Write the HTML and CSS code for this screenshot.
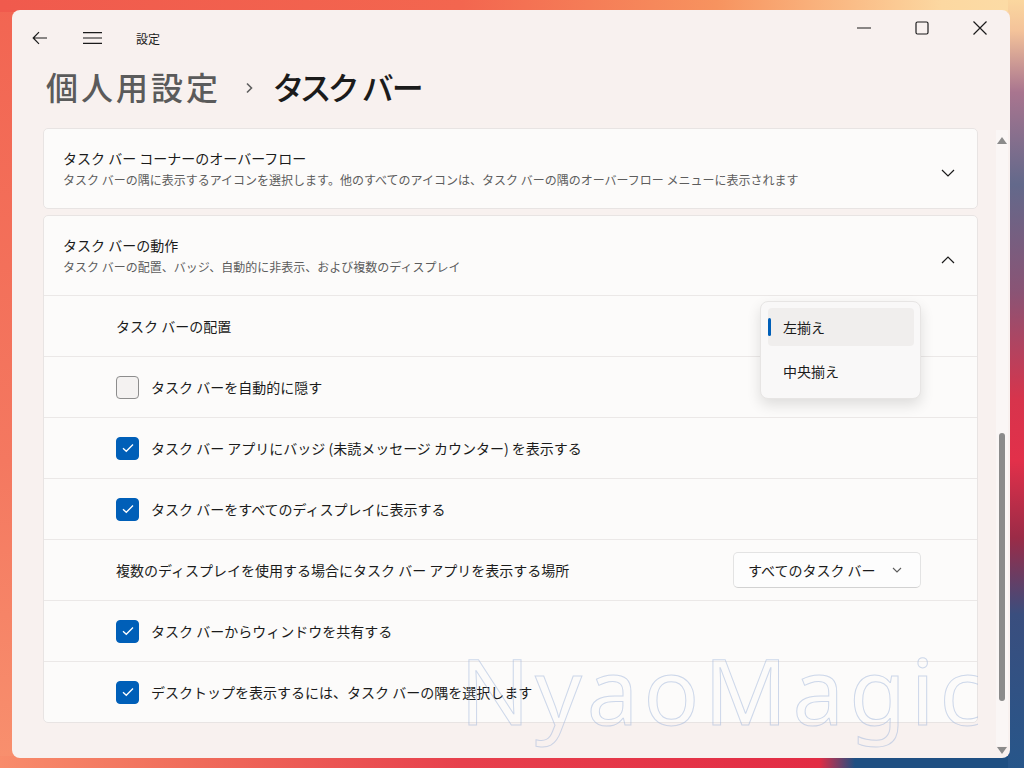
FILE: index.html
```html
<!DOCTYPE html>
<html lang="ja">
<head>
  <meta charset="UTF-8" />
  <title>設定</title>
  <link rel="stylesheet" href="styles.css">
</head>
<body>
  <div class="window">
    <div class="titlebar">
      <div class="nav">
        <span class="nav-btn">
          <svg width="16" height="14" viewBox="0 0 16 14"><path d="M15 7H1.5M7 1.2L1.2 7L7 12.8" fill="none" stroke="#1b1b1b" stroke-width="1.2"/></svg>
        </span>
        <span class="nav-btn">
          <svg width="19" height="12" viewBox="0 0 19 12"><path d="M0 0.6H19M0 6H19M0 11.4H19" fill="none" stroke="#1b1b1b" stroke-width="1.2"/></svg>
        </span>
        <span class="app-title">設定</span>
      </div>
      <div class="caption">
        <span class="cap-btn">
          <svg width="14" height="14" viewBox="0 0 14 14"><path d="M0 7H14" stroke="#1b1b1b" stroke-width="1.2"/></svg>
        </span>
        <span class="cap-btn">
          <svg width="14" height="14" viewBox="0 0 14 14"><rect x="1" y="1" width="12" height="12" rx="1.5" fill="none" stroke="#1b1b1b" stroke-width="1.2"/></svg>
        </span>
        <span class="cap-btn">
          <svg width="14" height="14" viewBox="0 0 14 14"><path d="M0.5 0.5L13.5 13.5M13.5 0.5L0.5 13.5" stroke="#1b1b1b" stroke-width="1.2"/></svg>
        </span>
      </div>
    </div>

    <h1 class="heading">
      <span class="crumb">個人用設定</span>
      <svg class="crumb-sep" width="9" height="14" viewBox="0 0 9 14"><path d="M2 2.5L6.5 7L2 11.5" fill="none" stroke="#5f5f5f" stroke-width="1.6"/></svg>
      <span class="current">タスク バー</span>
    </h1>

    <div class="content">
      <div class="cards">
        <div class="card">
          <div class="card-header">
            <div class="card-text">
              <div class="card-title">タスク バー コーナーのオーバーフロー</div>
              <div class="card-sub">タスク バーの隅に表示するアイコンを選択します。他のすべてのアイコンは、タスク バーの隅のオーバーフロー メニューに表示されます</div>
            </div>
            <svg class="chev" width="14" height="8" viewBox="0 0 14 8"><path d="M1 1L7 7L13 1" fill="none" stroke="#1b1b1b" stroke-width="1.2"/></svg>
          </div>
        </div>

        <div class="card">
          <div class="card-header">
            <div class="card-text">
              <div class="card-title">タスク バーの動作</div>
              <div class="card-sub">タスク バーの配置、バッジ、自動的に非表示、および複数のディスプレイ</div>
            </div>
            <svg class="chev" width="14" height="8" viewBox="0 0 14 8"><path d="M1 7L7 1L13 7" fill="none" stroke="#1b1b1b" stroke-width="1.2"/></svg>
          </div>

          <div class="row">
            <span class="row-label">タスク バーの配置</span>
          </div>
          <div class="row">
            <span class="checkbox"></span>
            <span class="row-label">タスク バーを自動的に隠す</span>
          </div>
          <div class="row">
            <span class="checkbox checked"><svg width="12" height="10" viewBox="0 0 12 10"><path d="M1 5.2L4.3 8.3L11 1.5" fill="none" stroke="#fff" stroke-width="1.3"/></svg></span>
            <span class="row-label">タスク バー アプリにバッジ (未読メッセージ カウンター) を表示する</span>
          </div>
          <div class="row">
            <span class="checkbox checked"><svg width="12" height="10" viewBox="0 0 12 10"><path d="M1 5.2L4.3 8.3L11 1.5" fill="none" stroke="#fff" stroke-width="1.3"/></svg></span>
            <span class="row-label">タスク バーをすべてのディスプレイに表示する</span>
          </div>
          <div class="row">
            <span class="row-label">複数のディスプレイを使用する場合にタスク バー アプリを表示する場所</span>
            <span class="combo">
              すべてのタスク バー
              <svg width="10" height="6" viewBox="0 0 10 6"><path d="M1 1L5 5L9 1" fill="none" stroke="#5d5d5d" stroke-width="1.1"/></svg>
            </span>
          </div>
          <div class="row">
            <span class="checkbox checked"><svg width="12" height="10" viewBox="0 0 12 10"><path d="M1 5.2L4.3 8.3L11 1.5" fill="none" stroke="#fff" stroke-width="1.3"/></svg></span>
            <span class="row-label">タスク バーからウィンドウを共有する</span>
          </div>
          <div class="row">
            <span class="checkbox checked"><svg width="12" height="10" viewBox="0 0 12 10"><path d="M1 5.2L4.3 8.3L11 1.5" fill="none" stroke="#fff" stroke-width="1.3"/></svg></span>
            <span class="row-label">デスクトップを表示するには、タスク バーの隅を選択します</span>
          </div>
        </div>
      </div>

      <div class="scrollbar">
        <span class="arrow-up"></span>
        <span class="thumb"></span>
        <span class="arrow-down"></span>
      </div>
    </div>

    <!-- open dropdown for タスク バーの配置 -->
    <div class="popup">
      <div class="popup-item selected">左揃え</div>
      <div class="popup-item">中央揃え</div>
    </div>

    <div class="watermark"><span>NyaoMagic</span></div>
  </div>
</body>
</html>
```

FILE: styles.css
```css
html, body {
  margin: 0;
  height: 100%;
}
body {
  width: 1024px;
  height: 768px;
  box-sizing: border-box;
  padding: 10px 14px 10px 12px;
  overflow: hidden;
  font-family: "Noto Sans CJK JP", "Noto Sans", sans-serif;
  color: #1b1b1b;
  background:
    linear-gradient(to bottom, #fbd79f 0%, #f4c39a 4%, #a9758f 12%, #63698b 24%, #8a5475 38%, #d7344c 52%, #e2304a 60%, #9b2b47 70%, #3a4e7e 80%, #27568a 100%) right top / 16px 100% no-repeat,
    linear-gradient(to right, #f05a4d 0%, #f3664f 45%, #f7935f 70%, #fcd8a1 92%, #fcdca6 100%) left top / 100% 12px no-repeat,
    linear-gradient(to right, #f88c6b 0%, #ef6a5a 20%, #e7404c 45%, #e22c44 80%, #1f4f82 83.5%, #1f4f82 100%) left bottom / 100% 12px no-repeat,
    linear-gradient(to bottom, #f26552 0%, #f47860 60%, #f8906e 100%);
}

.window {
  position: relative;
  height: 748px;
  display: flex;
  flex-direction: column;
  background: #f8f1ef;
  border-radius: 8px;
  overflow: hidden;
}

/* title bar */
.titlebar {
  display: flex;
  justify-content: space-between;
  height: 50px;
}
.nav {
  display: flex;
  align-items: center;
  height: 44px;
  margin-top: 6px;
  padding-left: 8px;
  gap: 12px;
}
.nav-btn {
  width: 40px;
  display: flex;
  justify-content: center;
}
.app-title {
  font-size: 12px;
  margin-left: 12px;
}
.caption {
  display: flex;
  margin-right: 1px;
}
.cap-btn {
  width: 58px;
  height: 36px;
  display: flex;
  align-items: center;
  justify-content: center;
}

/* heading */
.heading {
  margin: 0;
  height: 68px;
  box-sizing: border-box;
  padding: 0 0 16px 34px;
  display: flex;
  align-items: center;
  font-size: 32px;
  font-weight: 500;
  line-height: 40px;
}
.crumb {
  color: #5b5b5b;
  letter-spacing: 3px;
}
.crumb-sep {
  margin: 3px 20px 0 24px;
}
.current {
  color: #1b1b1b;
  font-feature-settings: "palt";
  letter-spacing: -1px;
}

/* content */
.content {
  flex: 1;
  display: flex;
  min-height: 0;
}
.cards {
  width: 935px;
  margin-left: 31px;
  display: flex;
  flex-direction: column;
  gap: 6px;
}
.card {
  background: #fcfbfa;
  border: 1px solid #e8e4e3;
  border-radius: 5px;
}
.card-header {
  height: 79px;
  box-sizing: border-box;
  padding: 19px 22px 0 19px;
  display: flex;
  justify-content: space-between;
}
.card-title {
  font-size: 14px;
  line-height: 20px;
}
.card-sub {
  font-size: 12px;
  line-height: 18px;
  margin-top: 3px;
  color: #5d5d5d;
}
.chev {
  margin-top: 21px;
}
.row {
  height: 60px;
  border-top: 1px solid #ebe8e7;
  display: flex;
  align-items: center;
  padding: 0 56px 0 72px;
  font-size: 14px;
}
.row-label {
  flex: 1;
}
.checkbox {
  width: 23px;
  height: 23px;
  box-sizing: border-box;
  margin-right: 12px;
  border: 1px solid #8d8d8d;
  border-radius: 4px;
  background: #f4f2f1;
  display: flex;
  align-items: center;
  justify-content: center;
}
.checkbox.checked {
  border-color: #005fb8;
  background: #005fb8;
}
.combo {
  width: 188px;
  height: 36px;
  box-sizing: border-box;
  padding: 0 18px 0 14px;
  display: flex;
  align-items: center;
  justify-content: space-between;
  background: #fdfdfd;
  border: 1px solid #e3e3e3;
  border-bottom-color: #d2d2d2;
  border-radius: 5px;
}

/* scrollbar */
.scrollbar {
  width: 12px;
  margin-left: 18px;
  padding: 9px 0 4px;
  display: flex;
  flex-direction: column;
  align-items: center;
  background: linear-gradient(#faf6f5, #faf6f5) center 2px / 12px calc(100% - 14px) no-repeat;
}
.arrow-up,
.arrow-down {
  width: 0;
  height: 0;
  border-left: 5px solid transparent;
  border-right: 5px solid transparent;
}
.arrow-up {
  border-bottom: 7px solid #8b8b8b;
}
.arrow-down {
  margin-top: 46px;
  border-top: 7px solid #8b8b8b;
}
.thumb {
  width: 6px;
  height: 268px;
  margin-top: auto;
  border-radius: 3px;
  background: #8b8b8b;
}

/* dropdown popup */
.popup {
  position: absolute;
  left: 748px;
  top: 291px;
  width: 161px;
  box-sizing: border-box;
  padding: 6px 6px 8px 7px;
  display: flex;
  flex-direction: column;
  gap: 6px;
  background: #f9f8f8;
  border: 1px solid #e7e5e4;
  border-radius: 8px;
  box-shadow: 0 6px 14px rgba(0, 0, 0, 0.12);
  font-size: 14px;
}
.popup-item {
  position: relative;
  height: 38px;
  line-height: 38px;
  padding-left: 15px;
  border-radius: 4px;
}
.popup-item.selected {
  background: #f0eeed;
}
.popup-item.selected::before {
  content: "";
  position: absolute;
  left: 0;
  top: 10px;
  width: 3px;
  height: 18px;
  border-radius: 2px;
  background: #005fb8;
}

/* watermark */
.watermark {
  position: absolute;
  left: 448px;
  top: 622px;
  width: 518px;
  height: 124px;
  overflow: hidden;
  pointer-events: none;
}
.watermark span {
  font-family: "Noto Sans", sans-serif;
  font-size: 92px;
  font-weight: 400;
  letter-spacing: 5px;
  line-height: 116px;
  white-space: nowrap;
  color: transparent;
  -webkit-text-stroke: 1px rgba(165, 185, 220, 0.55);
}
```
